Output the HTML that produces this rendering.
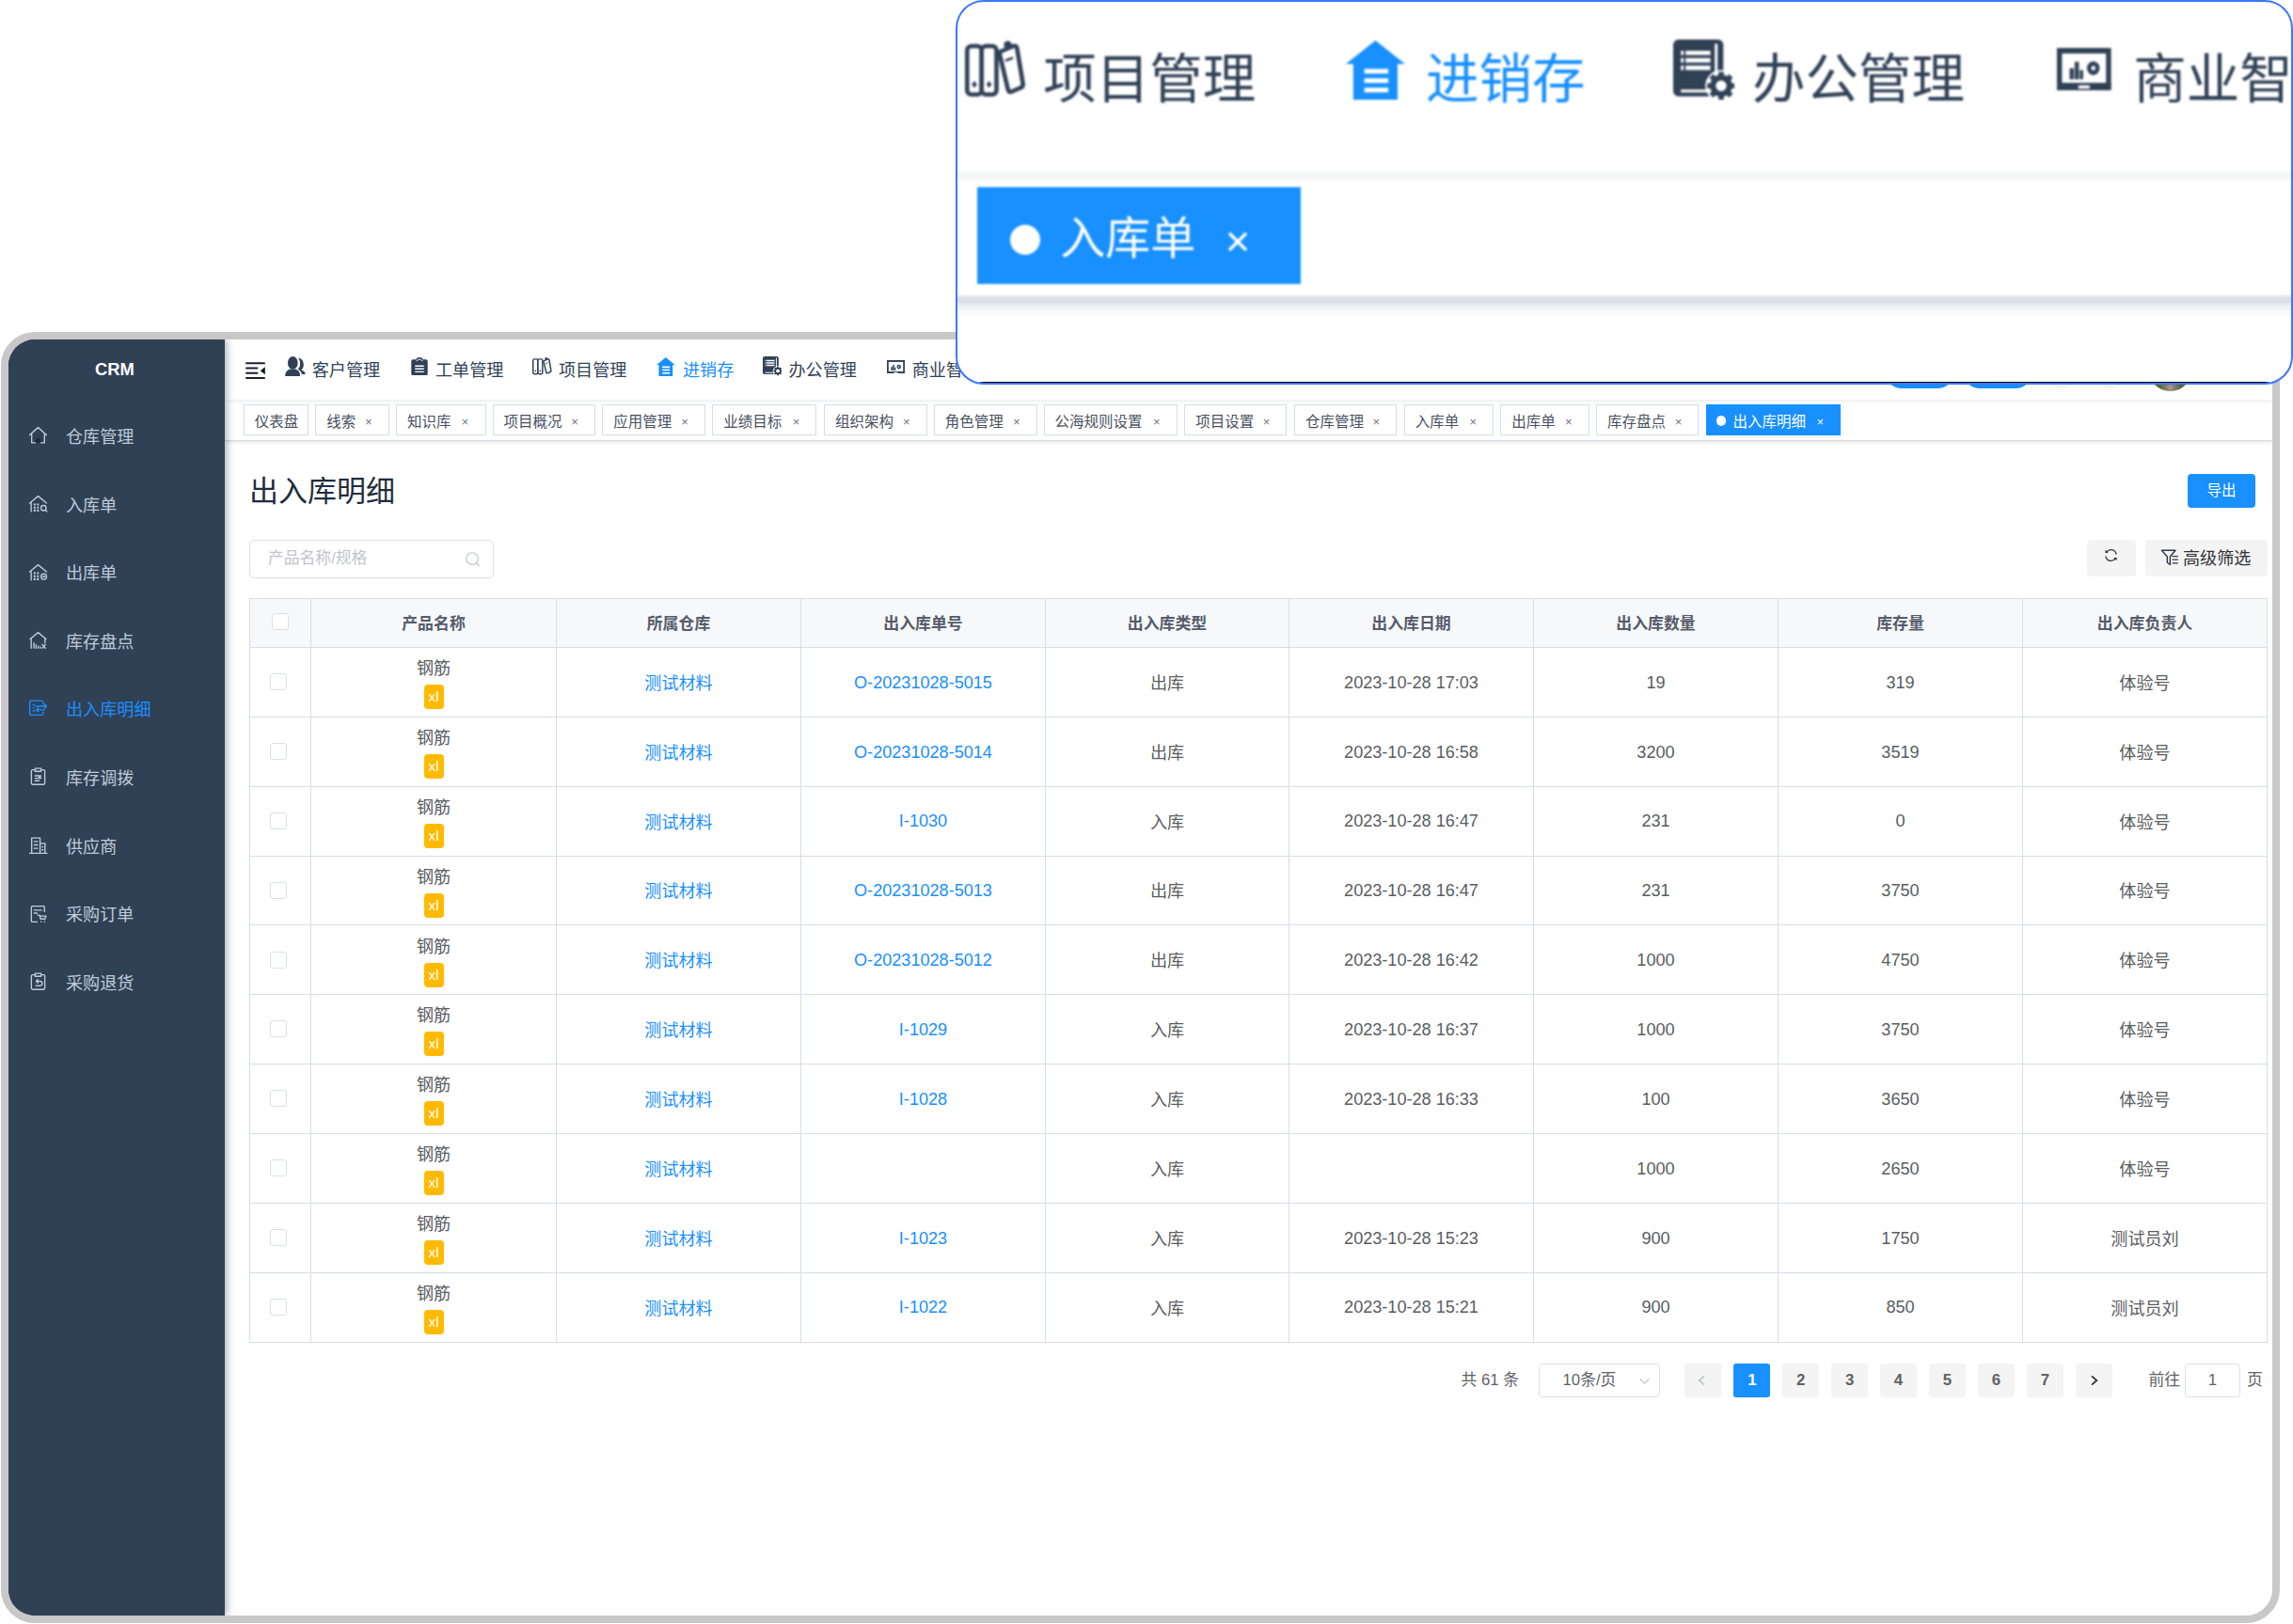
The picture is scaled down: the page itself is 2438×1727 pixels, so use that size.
<!DOCTYPE html>
<html lang="zh-CN">
<head>
<meta charset="utf-8">
<title>出入库明细</title>
<style>
*{box-sizing:border-box;margin:0;padding:0}
html,body{width:2438px;height:1727px;overflow:hidden;background:#fff}
body{position:relative;font-family:"Liberation Sans","Noto Sans CJK SC",sans-serif;color:#606266}
.abs{position:absolute}
.frame{position:absolute;left:1px;top:353px;width:2423px;height:1373px;border:8px solid #c8c8c8;border-radius:36px;overflow:hidden;background:#fff}
.inner{position:absolute;left:-9px;top:-361px;width:2438px;height:1727px}
.side{position:absolute;left:9px;top:361px;width:230px;height:1357px;background:#304156;box-shadow:2px 0 8px rgba(0,21,41,.35);z-index:5}
.crm{position:absolute;left:-2px;width:230px;top:18px;height:28px;line-height:28px;text-align:center;color:#fff;font-weight:bold;font-size:18.4px}
.mi{position:absolute;left:0;width:230px;height:72px;color:#bfcbd9;font-size:18.1px}
.mi svg{position:absolute;left:21px;top:25px;width:21px;height:21px}
.mi span{position:absolute;left:61px;top:1.8px;height:72px;line-height:72px;white-space:nowrap}
.mi.on{color:#1890ff}
.nav{position:absolute;left:239px;top:361px;width:2177px;height:64px;background:#fff;box-shadow:0 1px 5px rgba(0,21,41,.10);z-index:3}
.ni{position:absolute;top:1.5px;height:64px;line-height:62px;font-size:18.1px;color:#304156;white-space:nowrap}
.ni.on{color:#1890ff}
.tags{position:absolute;left:239px;top:425px;width:2177px;height:44px;background:#fff;border-bottom:1px solid #d8dce5;box-shadow:0 1px 4px rgba(0,0,0,.12);z-index:2}
.tg{position:absolute;top:4.8px;height:33.6px;border:1px solid #d8dce5;background:#fff;color:#495060;font-size:15.5px;line-height:32px;white-space:nowrap}
.tg b{font-weight:normal;position:absolute;left:11px;top:2.2px}
.tg i{font-style:normal;position:absolute;right:13px;top:2.5px;width:16px;text-align:center;font-size:13px;color:#6b7280}
.tg.on{background:#1890ff;border-color:#1890ff;color:#fff}
.tg.on i{color:#fff}
.title{position:absolute;left:265px;top:500.5px;height:44px;line-height:44px;font-size:31px;color:#1f2d3d;white-space:nowrap}
.btn{position:absolute;border-radius:4px;text-align:center;white-space:nowrap}
.search{position:absolute;left:265px;top:574px;width:260px;height:41px;border:1px solid #dcdfe6;border-radius:5px;background:#fff}
.search span{position:absolute;left:19px;top:0;line-height:38px;font-size:16.8px;color:#c0c4cc}
table{position:absolute;left:265px;top:636px;border-collapse:collapse;table-layout:fixed}
td,th{border:1px solid #d6dee7;text-align:center;font-size:18.1px;color:#5a5d62;padding:0;vertical-align:middle;overflow:hidden}
th{height:52px;background:#f7f8fa;font-weight:bold;color:#555b69;font-size:16.9px;padding-bottom:2px}
td{height:73.86px}
td a{color:#1890ff;text-decoration:none}
td .l{position:relative;top:.8px}
td .c{position:relative;top:-.6px}
.cb{display:inline-block;width:18px;height:18px;border:1px solid #dcdfe6;border-radius:3px;background:#fff;vertical-align:middle}
.pn{line-height:22px;height:22px;margin-top:3.5px}
.xl{display:inline-block;width:21px;height:26px;line-height:25px;background:#ffba00;color:#fff;border-radius:4px;font-size:15.5px;margin-top:6px}
.pg{position:absolute;top:1450px;height:36px;line-height:36px;font-size:16.8px;color:#606266;white-space:nowrap}
.pb{position:absolute;top:1450px;width:39px;height:36px;line-height:36px;border-radius:3px;background:#f4f4f5;color:#606266;font-weight:bold;font-size:16.8px;text-align:center}
.pb.on{background:#1890ff;color:#fff}
.pop{position:absolute;left:1016px;top:0;width:1422px;height:409px;border:2px solid #3b78ff;border-radius:30px;background:#fff;overflow:hidden;z-index:20}
.pin{position:absolute;left:-1018px;top:-2px;width:2438px;height:420px;filter:blur(.9px)}
.pt{position:absolute;top:42.6px;margin-left:-1.8px;height:84px;line-height:84px;font-size:56.5px;color:#304156;white-space:nowrap}
</style>
</head>
<body>

<div class="frame"><div class="inner">
<div class="abs" style="left:-15px;top:335px;width:254px;height:1410px;background:#304156;z-index:4"></div>
<div class="side"><div class="crm">CRM</div>
<div class="mi" style="top:66.3px"><svg viewBox="0 0 20 20" style=""><path fill="none" stroke="currentColor" stroke-width="1.3" stroke-linejoin="round" stroke-linecap="round" d="M1.5 10 L10 2.5 L18.5 10 M3.5 8.5 V18 H7 M16.5 8.5 V18 H13"/><rect x="7.5" y="13.5" width="5" height="4" fill="#1f2a38"/></svg><span>仓库管理</span></div>
<div class="mi" style="top:138.9px"><svg viewBox="0 0 20 20" style=""><path fill="none" stroke="currentColor" stroke-width="1.3" stroke-linejoin="round" stroke-linecap="round" d="M1.5 9.5 L10 2.5 L18.5 9.5 M3 8.5 V18"/><path fill="currentColor" d="M5.5 10h2v2h-2zM8.8 10h2v2h-2zM5.5 13h2v2h-2zM8.8 13h2v2h-2zM5.5 16h2v2h-2zM8.8 16h2v2h-2z"/><circle cx="15.5" cy="14.5" r="2.6" fill="none" stroke="currentColor" stroke-width="1.3" stroke-linejoin="round" stroke-linecap="round"/><path fill="none" stroke="currentColor" stroke-width="1.3" stroke-linejoin="round" stroke-linecap="round" d="M17.5 16.5 L19 18"/></svg><span>入库单</span></div>
<div class="mi" style="top:211.5px"><svg viewBox="0 0 20 20" style=""><path fill="none" stroke="currentColor" stroke-width="1.3" stroke-linejoin="round" stroke-linecap="round" d="M1.5 9.5 L10 2.5 L18.5 9.5 M3 8.5 V18"/><path fill="currentColor" d="M5.5 10h2v2h-2zM8.8 10h2v2h-2zM5.5 13h2v2h-2zM8.8 13h2v2h-2zM5.5 16h2v2h-2zM8.8 16h2v2h-2z"/><circle cx="15.8" cy="14.5" r="2.8" fill="none" stroke="currentColor" stroke-width="1.3" stroke-linejoin="round" stroke-linecap="round"/><path fill="none" stroke="currentColor" stroke-width="1.3" stroke-linejoin="round" stroke-linecap="round" d="M14.5 14.5h2.6"/></svg><span>出库单</span></div>
<div class="mi" style="top:284.1px"><svg viewBox="0 0 20 20" style=""><path fill="none" stroke="currentColor" stroke-width="1.3" stroke-linejoin="round" stroke-linecap="round" d="M2 9 L10 2.5 L18 9 M3 8.3 V18.3 M17 8.3 V13"/><path fill="none" stroke="currentColor" stroke-width="1.3" stroke-linejoin="round" stroke-linecap="round" stroke-width="1.1" d="M5.8 18.3V13 M8 18.3V15 M10.2 18.3V16.3 M12.4 18.3 V17 M14.3 18.3 L17.3 14.6 M14.3 14.6 L17.3 18.3"/></svg><span>库存盘点</span></div>
<div class="mi on" style="top:356.7px"><svg viewBox="0 0 20 20" style=""><path fill="none" stroke="currentColor" stroke-width="1.3" stroke-linejoin="round" stroke-linecap="round" stroke-width="1.5" d="M15 5.2 V3.4 a1.4 1.4 0 0 0 -1.4 -1.4 H3 a1.4 1.4 0 0 0 -1.4 1.4 V15.2 a1.4 1.4 0 0 0 1.4 1.4 H13.6 a1.4 1.4 0 0 0 1.4 -1.4 V13.5 M8 7.6 H18.3 M16.3 5.6 L18.6 7.6 L16.3 9.6 M8.5 11.3 H16.5 M10.3 9.5 L8.2 11.3 L10.3 13.1"/><path fill="currentColor" opacity=".75" d="M4.3 5.5h3v1.6h-3zM4.3 8.5h2.2v1.6h-2.2zM4.3 11.5h3v1.6h-3z"/></svg><span>出入库明细</span></div>
<div class="mi" style="top:429.3px"><svg viewBox="0 0 20 20" style=""><path fill="none" stroke="currentColor" stroke-width="1.3" stroke-linejoin="round" stroke-linecap="round" d="M6.5 3.5 H4.5 a1.3 1.3 0 0 0 -1.3 1.3 V17 a1.3 1.3 0 0 0 1.3 1.3 H15.5 a1.3 1.3 0 0 0 1.3 -1.3 V4.8 a1.3 1.3 0 0 0 -1.3 -1.3 H13.5 M7 2 H13 V5 H7 Z M7 9.5 H13 M7 12 H13 L11 10.5 M7 14.5 H11"/></svg><span>库存调拨</span></div>
<div class="mi" style="top:501.9px"><svg viewBox="0 0 20 20" style=""><path fill="none" stroke="currentColor" stroke-width="1.3" stroke-linejoin="round" stroke-linecap="round" d="M3.5 18.5 V3 H12 V18.5 M12 8.5 H17 V18.5 M1.5 18.5 H19 M6 6.5 H9.5 M6 10 H9.5 M6 13.5 H9.5 M14 12 H15 M14 15 H15"/></svg><span>供应商</span></div>
<div class="mi" style="top:574.5px"><svg viewBox="0 0 20 20" style=""><path fill="none" stroke="currentColor" stroke-width="1.3" stroke-linejoin="round" stroke-linecap="round" d="M9 18.5 H4.2 a1 1 0 0 1 -1 -1 V3.5 a1 1 0 0 1 1 -1 H15.5 a1 1 0 0 1 1 1 V8 M6 6.5 H13.5 M6 9.5 H9 M9.5 11.5 H11.5 L12.5 15.5 H17 L18 12.5 H12 M13 18 v.3 M16.5 18 v.3"/></svg><span>采购订单</span></div>
<div class="mi" style="top:647.1px"><svg viewBox="0 0 20 20" style=""><path fill="none" stroke="currentColor" stroke-width="1.3" stroke-linejoin="round" stroke-linecap="round" d="M6.5 3.5 H4.5 a1.3 1.3 0 0 0 -1.3 1.3 V17 a1.3 1.3 0 0 0 1.3 1.3 H15.5 a1.3 1.3 0 0 0 1.3 -1.3 V4.8 a1.3 1.3 0 0 0 -1.3 -1.3 H13.5 M7 2 H13 V5 H7 Z M8 10 H12 a2 2 0 0 1 0 4.5 H8 M9.7 8.3 L8 10 L9.7 11.7"/></svg><span>采购退货</span></div>
</div>
<div class="nav">
<svg viewBox="0 0 21 18.3" style="position:absolute;left:22px;top:23.5px;width:21px;height:18.3px"><g stroke="#1b1f2e" stroke-width="2" stroke-linecap="round" fill="none"><path d="M1 1.2H20M1 6.5H12.5M1 11.8H12.5M1 17.1H20"/></g><path d="M20.8 5.3 V13.2 L15.8 9.2Z" fill="#10131c"/></svg>
<svg viewBox="0 0 64 64" preserveAspectRatio="none" style="position:absolute;left:64px;top:18px;width:21.7px;height:21px;color:#304156"><g fill="currentColor"><ellipse cx="24.5" cy="21" rx="15.8" ry="20.8"/><path d="M0.5 64 C0.5 51 7 45.5 16 41.5 L33 41.5 C42 45.5 47.5 51 47.5 64 Z"/><path d="M41 5.5 C52 6 58.5 15 58.5 27 C58.5 35 55.5 41 51 44 C59 46.5 64 51 64 58 L52.5 58 C52 52 49 47 42.5 43.5 L41.5 40.5 C46 36 47.5 30 47.5 23 C47.5 16 45.5 10 41 5.5Z"/></g></svg>
<div class="ni" style="left:92.7px">客户管理</div>
<svg viewBox="0 0 64 64" preserveAspectRatio="none" style="position:absolute;left:197.7px;top:18.80000000000001px;width:18px;height:19.7px;color:#304156"><g fill="currentColor"><path d="M8 7 H20 a12 7 0 0 1 24 0 H56 a7 7 0 0 1 7 7 V56 a7 7 0 0 1 -7 7 H8 a7 7 0 0 1 -7 -7 V14 a7 7 0 0 1 7 -7z"/></g><g stroke="#fff" stroke-width="4.5" fill="none"><path d="M15 30H49M15 40H49M15 50H49"/><path d="M19 13 L32 6 L45 13" stroke-width="3"/></g></svg>
<div class="ni" style="left:224.0px">工单管理</div>
<svg viewBox="0 0 64 60" preserveAspectRatio="none" style="position:absolute;left:327px;top:19px;width:20.7px;height:18.5px;color:#304156"><g fill="none" stroke="currentColor" stroke-width="4.6" stroke-linejoin="round"><rect x="2.3" y="6" width="15.4" height="51.5" rx="4.5"/><rect x="17.7" y="6" width="15.8" height="51.5" rx="4.5"/><path d="M38.6 11.5 L51.5 6 Q54.5 5 55.3 8 L61.6 46 Q62 49 59.5 50.2 L49.5 54.5 Q46.5 55.5 45.8 52.5 L37 15 Q36.3 12.5 38.6 11.5Z" /></g><g fill="currentColor"><path d="M10 43l2.8 3.8L10 50.6 7.2 46.8zM25.6 43l2.8 3.8-2.8 3.8-2.8-3.800z"/><circle cx="45.5" cy="4.6" r="4.2"/></g><path d="M43 21.5 L51 18.5" stroke="currentColor" stroke-width="2.6" fill="none"/></svg>
<div class="ni" style="left:355.0px">项目管理</div>
<svg viewBox="0 0 64 64" preserveAspectRatio="none" style="position:absolute;left:459px;top:18.80000000000001px;width:19.7px;height:20.2px;color:#1890ff"><g fill="currentColor"><path d="M32 0 L64 25 H56 V64 H8 V25 H0 Z"/></g><g stroke="#fff" stroke-width="5" fill="none"><path d="M20 33H46M20 43H46M20 53H46"/></g></svg>
<div class="ni on" style="left:487.0px">进销存</div>
<svg viewBox="0 0 64 64" preserveAspectRatio="none" style="position:absolute;left:571.5px;top:18.30000000000001px;width:20.5px;height:20.5px;color:#304156"><g fill="currentColor"><rect x="0" y="0" width="52.5" height="59.5" rx="5.5"/></g><g stroke="#fff" fill="none"><path stroke-width="4.6" d="M8 14H39M8 21.8H39M8 29.6H39" stroke-dasharray="3 2 100"/><path stroke-width="3" d="M45 4.5V36"/><path stroke-width="3" d="M8 54H40"/></g><g><circle cx="50.2" cy="48.5" r="16.5" fill="#fff"/><circle cx="50.2" cy="48.5" r="8.6" fill="none" stroke="currentColor" stroke-width="6"/><g stroke="currentColor" stroke-width="5.6" transform="translate(50.2 48.5)"><path d="M0 -14.5v6M0 8.5v6M-14.5 0h6M8.500 0h6M-10.3 -10.3l4.300 4.300M6 6l4.300 4.300M10.3 -10.3l-4.300 4.300M-6 6l-4.300 4.300"/></g><circle cx="50.2" cy="48.5" r="5.2" fill="#fff"/></g></svg>
<div class="ni" style="left:599.5px">办公管理</div>
<svg viewBox="0 0 64 46" preserveAspectRatio="none" style="position:absolute;left:703.8px;top:21.5px;width:19px;height:14.8px;color:#304156"><g fill="none" stroke="currentColor" stroke-width="6"><rect x="3" y="3" width="58" height="38"/></g><g fill="currentColor"><rect x="0" y="38" width="64" height="8"/><rect x="15" y="22" width="5" height="12"/><rect x="21" y="15" width="5" height="19"/><rect x="27" y="24" width="4" height="10"/></g><circle cx="43" cy="22" r="5" fill="none" stroke="currentColor" stroke-width="5"/><rect x="25" y="40.5" width="14" height="3.5" rx="1.7" fill="#fff"/></svg>
<div class="ni" style="left:730.7px">商业智能</div>
<div class="abs" style="left:1765px;top:15.5px;width:74px;height:36px;border-radius:18px;background:#1890ff"></div>
<div class="abs" style="left:1848px;top:15.5px;width:74px;height:36px;border-radius:18px;background:#1890ff"></div>
<div class="abs" style="left:1935px;top:15px;width:36px;height:36px;border-radius:18px;border:1px solid #e4e7ed"></div>
<div class="abs" style="left:1986.5px;top:15px;width:36px;height:36px;border-radius:18px;border:1px solid #e4e7ed"></div>
<div class="abs" style="left:2045px;top:8.2px;width:46.6px;height:46.6px;border-radius:24px;background:radial-gradient(circle at 50% 92%,#b79aa5 0,#8a7f6a 9%,#4f6b3a 22%,#3f5a30 60%)"></div>
</div>
<div class="tags">
<div class="tg" style="left:19.8px;width:69.2px"><b>仪表盘</b></div>
<div class="tg" style="left:96.2px;width:78.5px"><b>线索</b><i>×</i></div>
<div class="tg" style="left:182.0px;width:95.5px"><b>知识库</b><i>×</i></div>
<div class="tg" style="left:284.6px;width:109.4px"><b>项目概况</b><i>×</i></div>
<div class="tg" style="left:401.3px;width:109.7px"><b>应用管理</b><i>×</i></div>
<div class="tg" style="left:518.2px;width:111.3px"><b>业绩目标</b><i>×</i></div>
<div class="tg" style="left:636.9px;width:109.9px"><b>组织架构</b><i>×</i></div>
<div class="tg" style="left:753.8px;width:109.9px"><b>角色管理</b><i>×</i></div>
<div class="tg" style="left:870.5px;width:142.4px"><b>公海规则设置</b><i>×</i></div>
<div class="tg" style="left:1020.2px;width:109.3px"><b>项目设置</b><i>×</i></div>
<div class="tg" style="left:1137.0px;width:109.2px"><b>仓库管理</b><i>×</i></div>
<div class="tg" style="left:1253.8px;width:95.4px"><b>入库单</b><i>×</i></div>
<div class="tg" style="left:1356.3px;width:94.4px"><b>出库单</b><i>×</i></div>
<div class="tg" style="left:1457.9px;width:109.6px"><b>库存盘点</b><i>×</i></div>
<div class="tg on" style="left:1574.6px;width:143.8px"><span class="abs" style="left:10px;top:11.6px;width:10.8px;height:10.8px;border-radius:5.4px;background:#fff"></span><b style="left:28px">出入库明细</b><i>×</i></div>
</div>
<div class="title">出入库明细</div>
<div class="btn" style="left:2326px;top:504px;width:72px;height:36px;line-height:35px;background:#1890ff;color:#fff;font-size:15.5px">导出</div>
<div class="search"><span>产品名称/规格</span><svg viewBox="0 0 20 20" style="position:absolute;left:227px;top:10px;width:19px;height:19px"><circle cx="9.5" cy="9.5" r="6.6" fill="none" stroke="#c0c4cc" stroke-width="1.3"/><path d="M14.3 14.5L17 17.2" stroke="#c0c4cc" stroke-width="1.4" stroke-linecap="round"/></svg></div>
<div class="btn" style="left:2219px;top:574px;width:52px;height:39px;background:#f4f4f5"><svg viewBox="0 0 20 20" style="position:absolute;left:17px;top:8px;width:17px;height:17px"><g fill="none" stroke="#303133" stroke-width="1.5" stroke-linecap="round"><path d="M16.5 8.5A6.6 6.6 0 0 0 4.5 6"/><path d="M3.5 11.5A6.6 6.6 0 0 0 15.5 14"/></g><path d="M2.8 3.2V7.2H6.8Z M17.2 16.8V12.8H13.2Z" fill="#303133"/></svg></div>
<div class="btn" style="left:2281px;top:574px;width:130px;height:39px;line-height:38px;background:#f4f4f5;color:#303133;font-size:18.1px;text-align:left"><svg viewBox="0 0 20 20" style="position:absolute;left:16px;top:10px;width:19px;height:19px"><g fill="none" stroke="#303846" stroke-width="1.5" stroke-linejoin="round"><path d="M1.5 1.4H16.8L10.9 8.4V17.4L7.7 15V8.4Z"/><path d="M13.2 8H19.8M13.2 11.8H19.8M13.2 15.6H19.8" stroke-width="1.3"/></g></svg><span style="position:absolute;left:40px;top:1.4px">高级筛选</span></div>
<table style="width:2145px"><colgroup><col style="width:65px"><col style="width:261px"><col style="width:260px"><col style="width:260px"><col style="width:259px"><col style="width:260px"><col style="width:260px"><col style="width:260px"><col style="width:260px"></colgroup>
<tr><th><span class="cb" style="margin-left:0.5px;margin-top:-3px"></span></th><th>产品名称</th><th>所属仓库</th><th>出入库单号</th><th>出入库类型</th><th>出入库日期</th><th>出入库数量</th><th>库存量</th><th>出入库负责人</th></tr>
<tr><td><span class="cb" style="margin-left:-5px;margin-top:-2px"></span></td><td><div class="pn">钢筋</div><div class="xl">xl</div></td><td><a class="c">测试材料</a></td><td><a class="l">O-20231028-5015</a></td><td><span class="c">出库</span></td><td><span class="l">2023-10-28 17:03</span></td><td><span class="l">19</span></td><td><span class="l">319</span></td><td><span class="c">体验号</span></td></tr>
<tr><td><span class="cb" style="margin-left:-5px;margin-top:-2px"></span></td><td><div class="pn">钢筋</div><div class="xl">xl</div></td><td><a class="c">测试材料</a></td><td><a class="l">O-20231028-5014</a></td><td><span class="c">出库</span></td><td><span class="l">2023-10-28 16:58</span></td><td><span class="l">3200</span></td><td><span class="l">3519</span></td><td><span class="c">体验号</span></td></tr>
<tr><td><span class="cb" style="margin-left:-5px;margin-top:-2px"></span></td><td><div class="pn">钢筋</div><div class="xl">xl</div></td><td><a class="c">测试材料</a></td><td><a class="l">I-1030</a></td><td><span class="c">入库</span></td><td><span class="l">2023-10-28 16:47</span></td><td><span class="l">231</span></td><td><span class="l">0</span></td><td><span class="c">体验号</span></td></tr>
<tr><td><span class="cb" style="margin-left:-5px;margin-top:-2px"></span></td><td><div class="pn">钢筋</div><div class="xl">xl</div></td><td><a class="c">测试材料</a></td><td><a class="l">O-20231028-5013</a></td><td><span class="c">出库</span></td><td><span class="l">2023-10-28 16:47</span></td><td><span class="l">231</span></td><td><span class="l">3750</span></td><td><span class="c">体验号</span></td></tr>
<tr><td><span class="cb" style="margin-left:-5px;margin-top:-2px"></span></td><td><div class="pn">钢筋</div><div class="xl">xl</div></td><td><a class="c">测试材料</a></td><td><a class="l">O-20231028-5012</a></td><td><span class="c">出库</span></td><td><span class="l">2023-10-28 16:42</span></td><td><span class="l">1000</span></td><td><span class="l">4750</span></td><td><span class="c">体验号</span></td></tr>
<tr><td><span class="cb" style="margin-left:-5px;margin-top:-2px"></span></td><td><div class="pn">钢筋</div><div class="xl">xl</div></td><td><a class="c">测试材料</a></td><td><a class="l">I-1029</a></td><td><span class="c">入库</span></td><td><span class="l">2023-10-28 16:37</span></td><td><span class="l">1000</span></td><td><span class="l">3750</span></td><td><span class="c">体验号</span></td></tr>
<tr><td><span class="cb" style="margin-left:-5px;margin-top:-2px"></span></td><td><div class="pn">钢筋</div><div class="xl">xl</div></td><td><a class="c">测试材料</a></td><td><a class="l">I-1028</a></td><td><span class="c">入库</span></td><td><span class="l">2023-10-28 16:33</span></td><td><span class="l">100</span></td><td><span class="l">3650</span></td><td><span class="c">体验号</span></td></tr>
<tr><td><span class="cb" style="margin-left:-5px;margin-top:-2px"></span></td><td><div class="pn">钢筋</div><div class="xl">xl</div></td><td><a class="c">测试材料</a></td><td><a class="l"></a></td><td><span class="c">入库</span></td><td><span class="l"></span></td><td><span class="l">1000</span></td><td><span class="l">2650</span></td><td><span class="c">体验号</span></td></tr>
<tr><td><span class="cb" style="margin-left:-5px;margin-top:-2px"></span></td><td><div class="pn">钢筋</div><div class="xl">xl</div></td><td><a class="c">测试材料</a></td><td><a class="l">I-1023</a></td><td><span class="c">入库</span></td><td><span class="l">2023-10-28 15:23</span></td><td><span class="l">900</span></td><td><span class="l">1750</span></td><td><span class="c">测试员刘</span></td></tr>
<tr><td><span class="cb" style="margin-left:-5px;margin-top:-2px"></span></td><td><div class="pn">钢筋</div><div class="xl">xl</div></td><td><a class="c">测试材料</a></td><td><a class="l">I-1022</a></td><td><span class="c">入库</span></td><td><span class="l">2023-10-28 15:21</span></td><td><span class="l">900</span></td><td><span class="l">850</span></td><td><span class="c">测试员刘</span></td></tr>
</table>
<div class="pg" style="left:1553.5px">共 61 条</div>
<div class="abs" style="left:1635.5px;top:1450px;width:129.5px;height:36px;border:1px solid #dcdfe6;border-radius:4px;background:#fff"><span class="abs" style="left:25px;top:0;line-height:33px;font-size:16.8px;color:#606266;white-space:nowrap">10条/页</span><svg viewBox="0 0 12 12" style="position:absolute;left:105px;top:11px;width:13px;height:13px"><path d="M1.5 4L6 8.5L10.5 4" fill="none" stroke="#c0c4cc" stroke-width="1.1"/></svg></div>
<div class="pb" style="left:1791.2px"><svg viewBox="0 0 12 12" style="position:absolute;left:11px;top:10px;width:16px;height:16px"><path d="M7.5 2.5L3.5 6L7.5 9.5" fill="none" stroke="#c0c4cc" stroke-width="1.3"/></svg></div>
<div class="pb on" style="left:1843.3px">1</div>
<div class="pb" style="left:1895.2px">2</div>
<div class="pb" style="left:1947.1px">3</div>
<div class="pb" style="left:1999px">4</div>
<div class="pb" style="left:2051px">5</div>
<div class="pb" style="left:2103px">6</div>
<div class="pb" style="left:2155px">7</div>
<div class="pb" style="left:2207px"><svg viewBox="0 0 12 12" style="position:absolute;left:11px;top:10px;width:16px;height:16px"><path d="M4.5 2.5L8.5 6L4.5 9.5" fill="none" stroke="#303133" stroke-width="1.3"/></svg></div>
<div class="pg" style="left:2284.5px">前往</div>
<div class="abs" style="left:2323px;top:1450px;width:59px;height:36px;border:1px solid #dcdfe6;border-radius:4px;background:#fff;text-align:center;line-height:34px;font-size:16.8px;color:#606266">1</div>
<div class="pg" style="left:2389px">页</div>
</div></div>
<div class="pop"><div class="pin">
<svg viewBox="0 0 64 60" preserveAspectRatio="none" style="position:absolute;left:1026px;top:42.7px;width:64px;height:60px;color:#304156"><g fill="none" stroke="currentColor" stroke-width="4.6" stroke-linejoin="round"><rect x="2.3" y="6" width="15.4" height="51.5" rx="4.5"/><rect x="17.7" y="6" width="15.8" height="51.5" rx="4.5"/><path d="M38.6 11.5 L51.5 6 Q54.5 5 55.3 8 L61.6 46 Q62 49 59.5 50.2 L49.5 54.5 Q46.5 55.5 45.8 52.5 L37 15 Q36.3 12.5 38.6 11.5Z" /></g><g fill="currentColor"><path d="M10 43l2.8 3.8L10 50.6 7.2 46.8zM25.6 43l2.8 3.8-2.8 3.8-2.8-3.800z"/><circle cx="45.5" cy="4.6" r="4.2"/></g><path d="M43 21.5 L51 18.5" stroke="currentColor" stroke-width="2.6" fill="none"/></svg>
<div class="pt" style="left:1111px;">项目管理</div>
<svg viewBox="0 0 64 64" preserveAspectRatio="none" style="position:absolute;left:1431.4px;top:42.7px;width:62.8px;height:63.7px;color:#1890ff"><g fill="currentColor"><path d="M32 0 L64 25 H56 V64 H8 V25 H0 Z"/></g><g stroke="#fff" stroke-width="5" fill="none"><path d="M20 33H46M20 43H46M20 53H46"/></g></svg>
<div class="pt" style="left:1517.8px;color:#1890ff">进销存</div>
<svg viewBox="0 0 64 64" preserveAspectRatio="none" style="position:absolute;left:1778.8px;top:41.8px;width:65px;height:65px;color:#304156"><g fill="currentColor"><rect x="0" y="0" width="52.5" height="59.5" rx="5.5"/></g><g stroke="#fff" fill="none"><path stroke-width="4.6" d="M8 14H39M8 21.8H39M8 29.6H39" stroke-dasharray="3 2 100"/><path stroke-width="3" d="M45 4.5V36"/><path stroke-width="3" d="M8 54H40"/></g><g><circle cx="50.2" cy="48.5" r="16.5" fill="#fff"/><circle cx="50.2" cy="48.5" r="8.6" fill="none" stroke="currentColor" stroke-width="6"/><g stroke="currentColor" stroke-width="5.6" transform="translate(50.2 48.5)"><path d="M0 -14.5v6M0 8.5v6M-14.5 0h6M8.500 0h6M-10.3 -10.3l4.300 4.300M6 6l4.300 4.300M10.3 -10.3l-4.300 4.300M-6 6l-4.300 4.300"/></g><circle cx="50.2" cy="48.5" r="5.2" fill="#fff"/></g></svg>
<div class="pt" style="left:1864.7px;">办公管理</div>
<svg viewBox="0 0 64 46" preserveAspectRatio="none" style="position:absolute;left:2187px;top:51.4px;width:57.6px;height:45.1px;color:#304156"><g fill="none" stroke="currentColor" stroke-width="6"><rect x="3" y="3" width="58" height="38"/></g><g fill="currentColor"><rect x="0" y="38" width="64" height="8"/><rect x="15" y="22" width="5" height="12"/><rect x="21" y="15" width="5" height="19"/><rect x="27" y="24" width="4" height="10"/></g><circle cx="43" cy="22" r="5" fill="none" stroke="currentColor" stroke-width="5"/><rect x="25" y="40.5" width="14" height="3.5" rx="1.7" fill="#fff"/></svg>
<div class="pt" style="left:2270px;">商业智能</div>
<div class="abs" style="left:990px;top:181px;width:1480px;height:12px;background:linear-gradient(#fff,#f1f2f5 45%,#f6f7f9 70%,#fff)"></div>
<div class="abs" style="left:1038.8px;top:198.8px;width:343.8px;height:103px;background:#1890ff"></div>
<div class="abs" style="left:1074px;top:238.6px;width:32px;height:32px;border-radius:16px;background:#fff"></div>
<div class="abs" style="left:1127.3px;top:219.3px;height:70px;line-height:70px;font-size:48px;color:#fff;white-space:nowrap">入库单</div>
<svg viewBox="0 0 22 22" style="position:absolute;left:1305px;top:245.5px;width:22px;height:22px"><path d="M2 2L20 20M20 2L2 20" stroke="#fff" stroke-width="3.4"/></svg>
<div class="abs" style="left:990px;top:313px;width:1480px;height:24px;background:linear-gradient(#fff 0,#dcdfe6 12%,#dcdfe6 36%,#eceef2 50%,#f7f8fa 75%,#fff 100%)"></div>
</div>
<div class="abs" style="left:23px;top:404px;width:1372px;height:1px;background:#000"></div>
</div>
</body></html>
